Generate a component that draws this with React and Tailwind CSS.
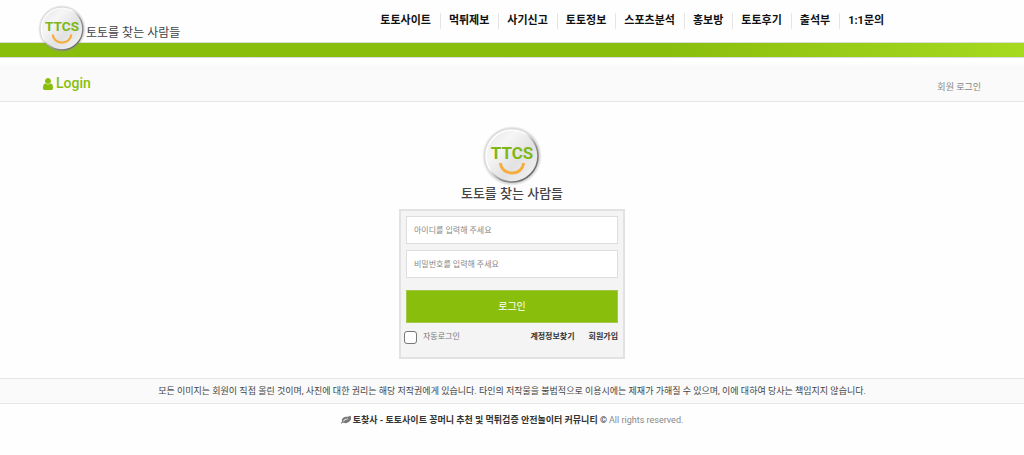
import React, { useState } from "react";

const menu = ["토토사이트", "먹튀제보", "사기신고", "토토정보", "스포츠분석", "홍보방", "토토후기", "출석부", "1:1문의"];

const Emblem = ({ className }) => (
  <svg viewBox="0 0 60 60" className={className} aria-hidden="true">
    <defs>
      <linearGradient id="disc" x1="0" y1="0" x2="1" y2="1">
        <stop offset="0" stopColor="#e4e4e4" />
        <stop offset="0.3" stopColor="#f6f6f6" />
        <stop offset="0.6" stopColor="#e2e2e2" />
        <stop offset="1" stopColor="#f5f5f5" />
      </linearGradient>
      <linearGradient id="rim" x1="0" y1="0" x2="1" y2="1">
        <stop offset="0.4" stopColor="#ffffff" />
        <stop offset="0.6" stopColor="#999999" />
        <stop offset="1" stopColor="#555555" />
      </linearGradient>
      <radialGradient id="glow">
        <stop offset="0.84" stopColor="#8c8c8c" stopOpacity="0.6" />
        <stop offset="1" stopColor="#8c8c8c" stopOpacity="0" />
      </radialGradient>
    </defs>
    <circle cx="30" cy="30" r="30" fill="url(#glow)" />
    <circle cx="30" cy="30" r="26" fill="url(#disc)" stroke="url(#rim)" strokeWidth="1.6" />
    <text x="30" y="33" textAnchor="middle" fontSize="17" fontWeight="700" fill="#7fb717" className="font-['Roboto',sans-serif]">
      TTCS
    </text>
    <path d="M18.500 37a11.500 10 0 0 0 23 0" fill="none" stroke="#f6ad3c" strokeWidth="2.800" />
  </svg>
);

const UserIcon = () => (
  <svg viewBox="0 0 1792 1792" className="h-3.5 w-3.5 -ml-0.5 fill-current" aria-hidden="true">
    <path d="M1536 1399q0 109-62.500 187t-150.500 78h-854q-88 0-150.500-78t-62.500-187q0-85 8.500-160.500t31.500-152 58.500-131 94-89 134.500-34.500q131 128 313 128t313-128q76 0 134.500 34.500t94 89 58.500 131 31.500 152 8.500 160.500zm-256-887q0 159-112.500 271.500t-271.500 112.500-271.500-112.500-112.500-271.500 112.500-271.500 271.500-112.500 271.500 112.500 112.500 271.500z" />
  </svg>
);

const LeafIcon = () => (
  <svg viewBox="0 0 1792 1792" className="h-[10px] w-[10px] shrink-0 fill-[#777]" aria-hidden="true">
    <path d="M1280 704q0-26-19-45t-45-19q-172 0-318 49.500t-259.500 134-235.500 219.500q-19 21-19 45 0 26 19 45t45 19q24 0 45-19 27-24 74-71t67-66q137-124 268.500-176t313.500-52q26 0 45-19t19-45zm512-198q0 95-20 193-46 224-184.500 383t-357.500 268q-214 108-438 108-148 0-286-47-15-5-88-42t-96-37q-16 0-39.500 32t-45 70-52.500 70-60 32q-43 0-63.500-17.500t-45.500-59.500q-2-4-6-11t-5.500-10-3-9.500-1.500-13.500q0-35 31-73.500t68-65.500 68-56 31-48q0-4-14-38t-16-44q-9-51-9-104 0-115 43.500-220t119-184.500 170.500-139 204-95.500q55-18 145-25.500t179.500-9 178.500-6 163.500-24 113.500-56.500l29.500-29.500 29.500-28 27-20 36.500-16 43.500-4.500q39 0 70.500 46t47.500 112 24 124 8 96z" />
  </svg>
);

const Header = () => (
  <header>
    <div className="mx-auto grid h-[42px] max-w-[1100px] grid-cols-[9fr_16fr] px-[38px]">
      <a href="#" className="relative z-10 flex items-start pt-[5px] text-[12px] leading-4 text-[#444]">
        <Emblem className="h-12 w-12 shrink-0" />
        <span className="pt-5 whitespace-nowrap">토토를 찾는 사람들</span>
      </a>
      <nav className="pt-[13px]">
        <ul className="flex divide-x divide-[#e5e5e5]">
          {menu.map((item) => (
            <li key={item} className="pr-[9px] pl-2 text-[11px] leading-4 font-bold whitespace-nowrap text-[#111] first:pl-px">
              <a href="#">{item}</a>
            </li>
          ))}
        </ul>
      </nav>
    </div>
    <div className="h-4 border-y border-[#dcdcdc] bg-linear-to-r from-[#8abe0c] from-65% to-[#a5da20]" />
  </header>
);

const LoginForm = () => {
  const [keep, setKeep] = useState(false);

  return (
    <form onSubmit={(e) => e.preventDefault()} className="w-[226px] border-2 border-[#e2e2e2] bg-[#f4f4f4] px-[5px] pt-[5px] pb-3">
      <input type="text" aria-label="아이디" placeholder="아이디를 입력해 주세요"
        className="mb-1.5 block h-7 w-full border border-[#ddd] bg-white px-[7px] text-[8px] text-[#444] outline-none placeholder:text-[#888]" />
      <input type="password" aria-label="비밀번호" placeholder="비밀번호를 입력해 주세요"
        className="mb-3 block h-7 w-full border border-[#ddd] bg-white px-[7px] text-[8px] text-[#444] outline-none placeholder:text-[#888]" />
      <button type="submit" className="block h-[33px] w-full border border-[#a3c94a] bg-[#8abe0c] text-[10px] text-white">
        로그인
      </button>
      <div className="flex items-center pt-1.5 text-[8px] leading-4">
        <label className="flex items-center gap-1.5 text-[#777]">
          <input type="checkbox" checked={keep} onChange={(e) => setKeep(e.target.checked)}
            className="-ml-0.5 h-[13px] w-[13px] appearance-none rounded-[3px] border border-[#777] bg-white checked:bg-[#8abe0c]" />
          자동로그인
        </label>
        <a href="#" className="ml-auto font-bold text-[#333]">계정정보찾기</a>
        <a href="#" className="ml-3.5 font-bold text-[#333]">회원가입</a>
      </div>
    </form>
  );
};

const App = () => (
  <div className="min-h-screen bg-[#fefefe] font-['Roboto','Noto_Sans_CJK_KR',sans-serif]">
    <Header />
    <div className="border-b border-[#e5e7e7] bg-linear-to-b from-white from-10% to-[#f9faf9] to-20%">
      <div className="mx-auto flex h-[43px] max-w-[1100px] items-center justify-between px-[43px] pt-2">
        <h1 className="flex items-center gap-px text-[14px] text-[#8abe0c] font-medium">
          <UserIcon />
          Login
        </h1>
        <span className="pt-2 text-[9px] text-[#888]">회원 로그인</span>
      </div>
    </div>

    <main className="flex flex-col items-center pt-6 pb-[19px]">
      <a href="#" className="mb-[7px] flex flex-col items-center text-[13px] leading-4 font-medium text-[#444]">
        <Emblem className="h-[60px] w-[60px]" />
        토토를 찾는 사람들
      </a>
      <LoginForm />
    </main>

    <footer className="text-center text-[9px] leading-4 text-[#444]">
      <p className="border-y border-[#e5e7e7] bg-[#f9faf9] py-1">
        모든 이미지는 회원이 직접 올린 것이며, 사진에 대한 권리는 해당 저작권에게 있습니다. 타인의 저작물을 불법적으로 이용시에는 제재가 가해질 수 있으며, 이에 대하여 당사는 책임지지 않습니다.
      </p>
      <p className="flex items-center justify-center gap-0.5 pt-2 text-[#888]">
        <LeafIcon />
        <strong className="text-[#333]">토찾사 - 토토사이트 꽁머니 추천 및 먹튀검증 안전놀이터 커뮤니티 ©</strong>
        <span>All rights reserved.</span>
      </p>
    </footer>
  </div>
);

export default App;
